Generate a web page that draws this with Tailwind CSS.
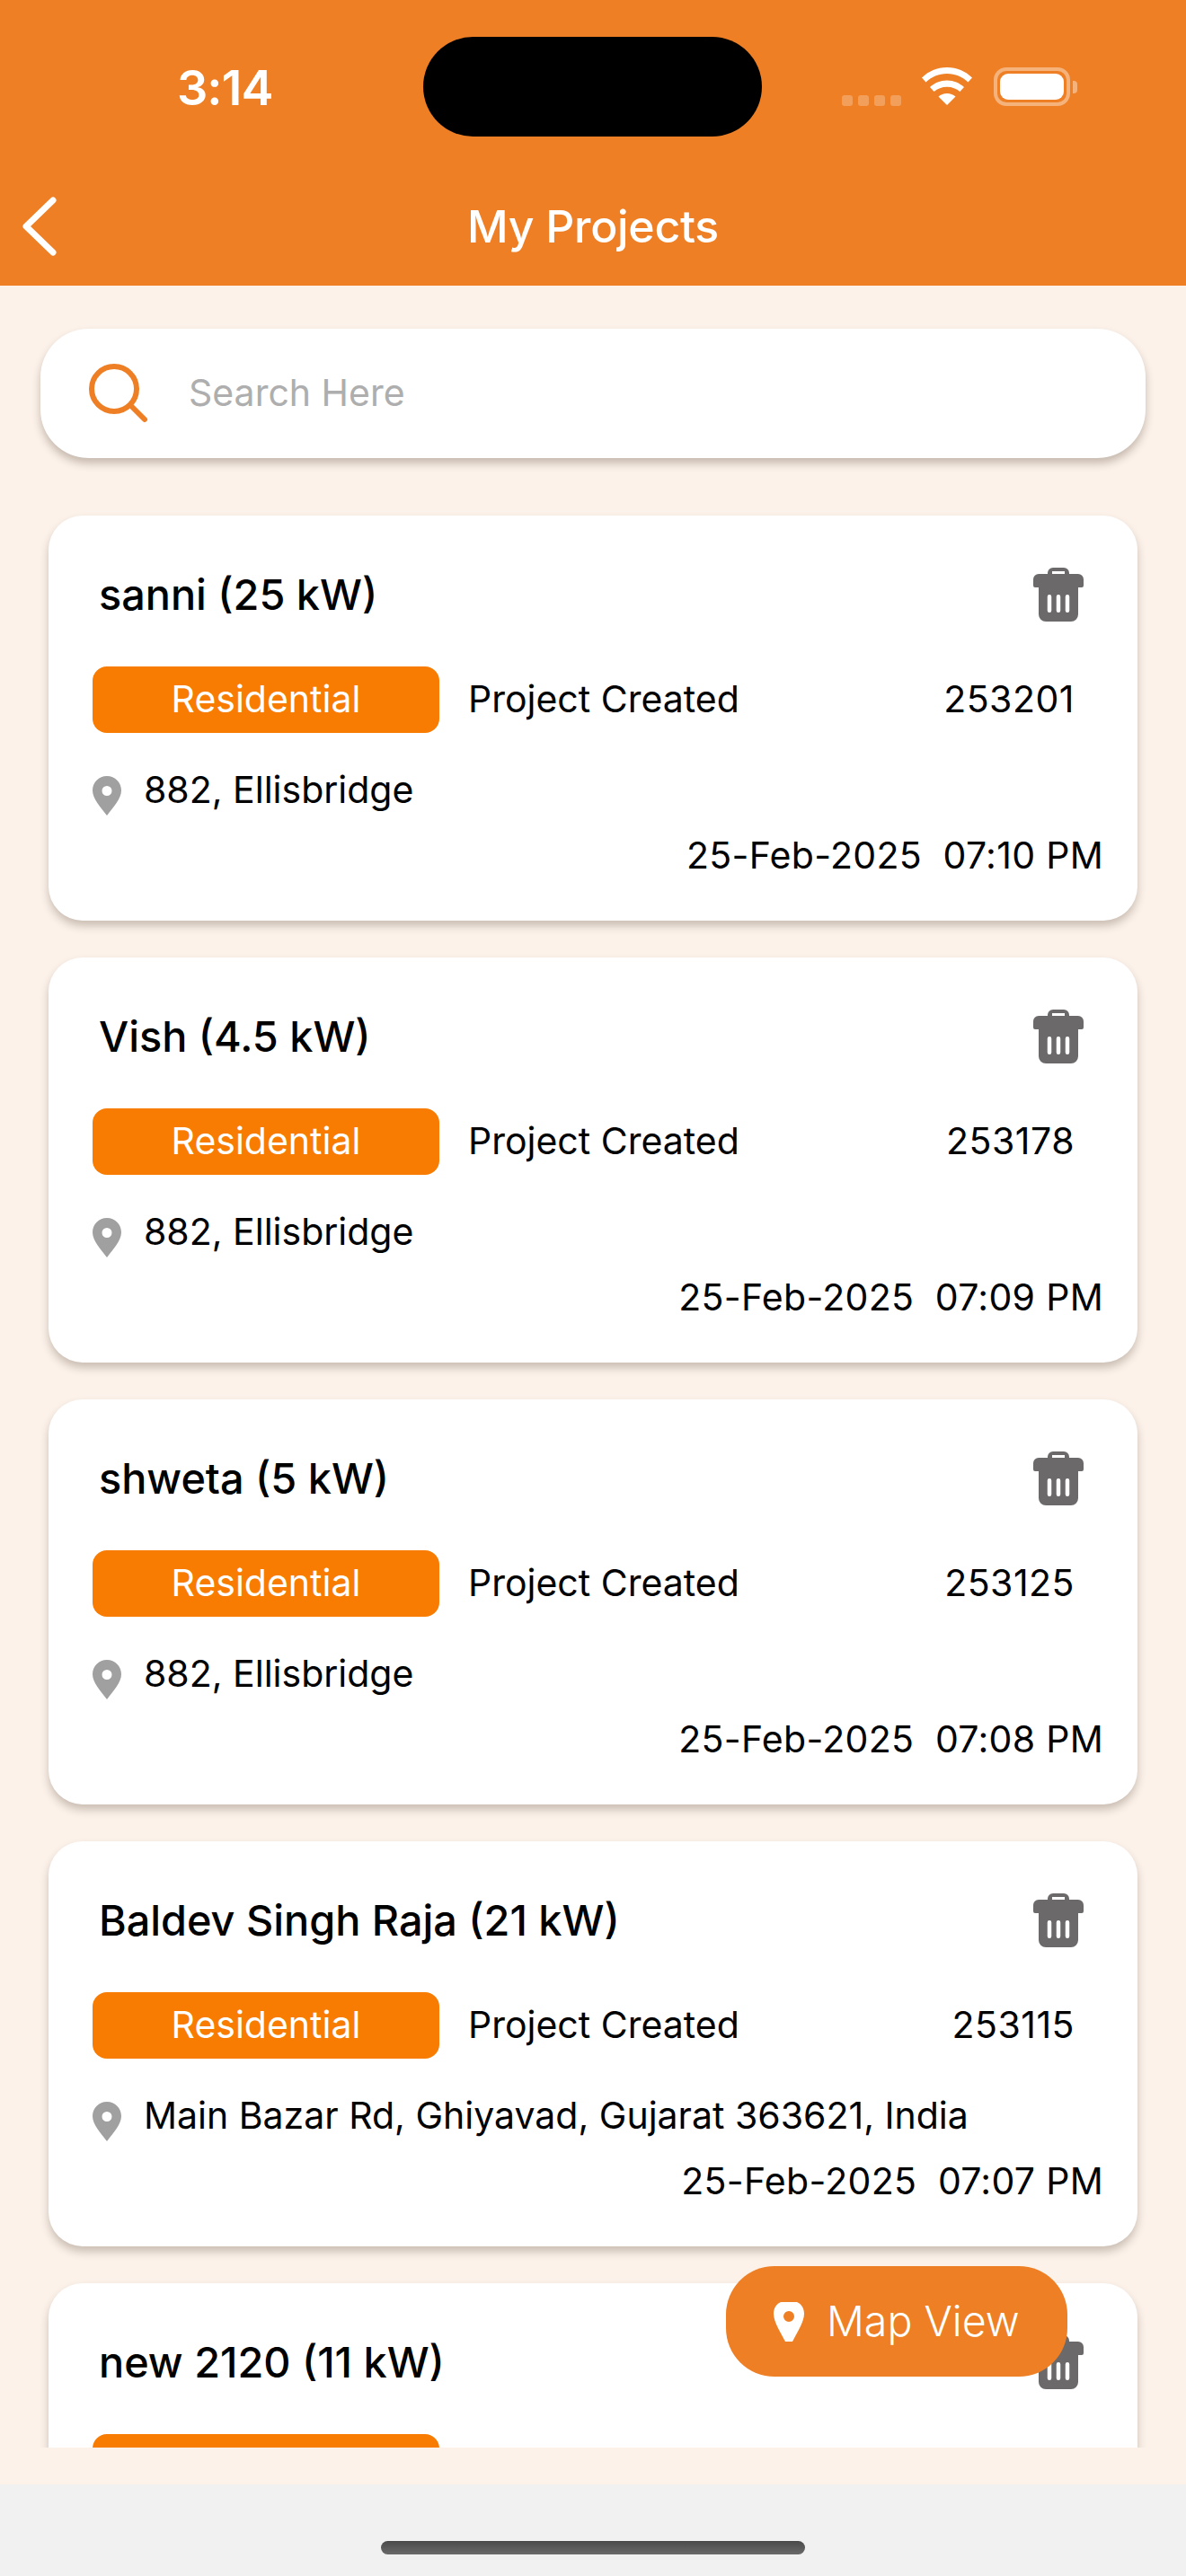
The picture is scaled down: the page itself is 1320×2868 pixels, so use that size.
<!DOCTYPE html>
<html><head><meta charset="utf-8">
<script src="https://cdn.jsdelivr.net/npm/@tailwindcss/browser@4"></script>
</head>
<body class="m-0 font-['Inter','Liberation_Sans',sans-serif]">
<div class="relative w-[1320px] h-[2868px] bg-[#f1f1f1] overflow-hidden flex flex-col">
  <header class="h-[318px] shrink-0 bg-[#ee7f24] text-white flex flex-col">
    <div class="h-[193px] shrink-0 relative flex">
      <div class="w-[471px] pl-[197px] pt-[68px] text-[54px] leading-[60px] font-semibold tracking-[-1px]">3:14</div>
      <div class="mt-[41px] w-[377px] h-[111px] rounded-[56px] bg-black"></div>
      <div class="ml-[89px] pt-[72px] flex items-start">
        <div class="mt-[34px] flex gap-[6px]">
          <span class="w-[12px] h-[12px] rounded-[3px] bg-white/25"></span><span class="w-[12px] h-[12px] rounded-[3px] bg-white/25"></span><span class="w-[12px] h-[12px] rounded-[3px] bg-white/25"></span><span class="w-[12px] h-[12px] rounded-[3px] bg-white/25"></span>
        </div>
        <svg class="ml-[22px] mt-[3px]" width="58" height="44" viewBox="0 0 58 44"><path fill="#fff" d="M29 0C18 0 8.500 4.200 1 11.500l4.500 5C11.500 10.600 19.800 7 29 7s17.500 3.600 23.500 9.500l4.500-5C49.500 4.200 40 0 29 0zM29 14.500c-7.500 0-13.800 2.900-19 7.500l4.600 5c3.900-3.300 8.700-5.300 14.400-5.300s10.500 2 14.400 5.300l4.600-5c-5.200-4.600-11.500-7.500-19-7.500zM29 29c-3.700 0-6.900 1.300-9.500 3.500L29 42l9.500-9.500C35.900 30.300 32.700 29 29 29z"/></svg>
        <div class="ml-[23px] mt-[3px] w-[85px] h-[43px] rounded-[14px] border-[4px] border-white/40 p-[3px] box-border"><div class="w-full h-full rounded-[9px] bg-white"></div></div>
        <div class="ml-[3px] mt-[18px] w-[5px] h-[14px] rounded-r-[4px] bg-white/40"></div>
      </div>
    </div>
    <div class="relative flex-1 flex items-start justify-center pt-[30px]">
      <svg class="absolute left-[23px] top-[26px]" width="40" height="66" viewBox="0 0 40 66" fill="none"><path d="M36 4 L6 33 L36 62" stroke="#fff" stroke-width="7" stroke-linecap="round" stroke-linejoin="round"/></svg>
      <h1 class="text-[50px] leading-[58px] font-medium tracking-[-0.3px]">My Projects</h1>
    </div>
  </header>
  <main class="relative h-[2448px] shrink-0 bg-[#fcf2ea]">
    <div class="h-[2407px] overflow-hidden px-[41px] pt-[48px]">
      <div class="ml-[4px] w-[1230px] h-[144px] rounded-[54px] bg-white shadow-[0_6px_10px_rgba(60,40,20,0.28)] flex items-center pl-[54px]">
        <svg width="66" height="66" viewBox="0 0 66 66" fill="none"><circle cx="28" cy="28" r="25" stroke="#ee7f24" stroke-width="6"/><path d="M46 46 L62 62" stroke="#ee7f24" stroke-width="6" stroke-linecap="round"/></svg>
        <span class="ml-[45px] text-[41px] text-[#aeaeae]">Search Here</span>
      </div>
      <div class="mt-[64px] mx-[13px] flex flex-col gap-[41px]">
        <article class="relative h-[451px] shrink-0 rounded-[38px] bg-white shadow-[0_6px_10px_rgba(60,40,20,0.25)] pl-[49px] pr-[38px]">
          <div class="h-[168px] pt-[60px] pl-[7px] text-[46.800px] leading-[56px] font-medium text-black">sanni (25 kW)</div>
          <svg class="absolute left-[1096px] top-[58px]" width="56" height="60" viewBox="0 0 56 60"><path fill="#6b6969" fill-rule="evenodd" d="M16 7V6a6 6 0 0 1 6-6h12a6 6 0 0 1 6 6v1h10a6 6 0 0 1 6 6v7a2 2 0 0 1-2 2h-4v30a8 8 0 0 1-8 8H14a8 8 0 0 1-8-8V22H2a2 2 0 0 1-2-2v-7a6 6 0 0 1 6-6zM21 4v3h14V4zM18 30a2.250 2.250 0 0 0-2.250 2.250v15.500a2.250 2.250 0 0 0 4.500 0v-15.500A2.250 2.250 0 0 0 18 30zM28 30a2.250 2.250 0 0 0-2.250 2.250v15.500a2.250 2.250 0 0 0 4.500 0v-15.500A2.250 2.250 0 0 0 28 30zM38 30a2.250 2.250 0 0 0-2.250 2.250v15.500a2.250 2.250 0 0 0 4.500 0v-15.500A2.250 2.250 0 0 0 38 30z"/></svg>
          <div class="flex items-center h-[74px] text-[41px] text-black">
            <span class="w-[386px] h-[74px] pb-[1px] rounded-[16px] bg-[#f87c02] text-white flex items-center justify-center">Residential</span>
            <span class="ml-[32px]">Project Created</span>
            <span class="absolute right-[70px] tracking-[0.5px]">253201</span>
          </div>
          <div class="mt-[48px] flex items-center h-[44px] text-[41px] text-black">
            <svg width="32" height="44" viewBox="0 0 32 44"><path fill="#a0a0a0" fill-rule="evenodd" d="M16 0C7 0 0 7 0 16c0 9 9 19 16 28 7-9 16-19 16-28C32 7 25 0 16 0zm0 11a5.500 5.500 0 1 1 0 11 5.500 5.500 0 0 1 0-11z"/></svg>
            <span class="ml-[25px] mb-[12px]">882, Ellisbridge</span>
          </div>
          <div class="mt-[22px] flex justify-end text-[41px] leading-[44px] text-black whitespace-pre tracking-[0.3px]">25-Feb-2025  07:10 PM</div>
        </article>
        <article class="relative h-[451px] shrink-0 rounded-[38px] bg-white shadow-[0_6px_10px_rgba(60,40,20,0.25)] pl-[49px] pr-[38px]">
          <div class="h-[168px] pt-[60px] pl-[7px] text-[46.800px] leading-[56px] font-medium text-black">Vish (4.5 kW)</div>
          <svg class="absolute left-[1096px] top-[58px]" width="56" height="60" viewBox="0 0 56 60"><path fill="#6b6969" fill-rule="evenodd" d="M16 7V6a6 6 0 0 1 6-6h12a6 6 0 0 1 6 6v1h10a6 6 0 0 1 6 6v7a2 2 0 0 1-2 2h-4v30a8 8 0 0 1-8 8H14a8 8 0 0 1-8-8V22H2a2 2 0 0 1-2-2v-7a6 6 0 0 1 6-6zM21 4v3h14V4zM18 30a2.250 2.250 0 0 0-2.250 2.250v15.500a2.250 2.250 0 0 0 4.500 0v-15.500A2.250 2.250 0 0 0 18 30zM28 30a2.250 2.250 0 0 0-2.250 2.250v15.500a2.250 2.250 0 0 0 4.500 0v-15.500A2.250 2.250 0 0 0 28 30zM38 30a2.250 2.250 0 0 0-2.250 2.250v15.500a2.250 2.250 0 0 0 4.500 0v-15.500A2.250 2.250 0 0 0 38 30z"/></svg>
          <div class="flex items-center h-[74px] text-[41px] text-black">
            <span class="w-[386px] h-[74px] pb-[1px] rounded-[16px] bg-[#f87c02] text-white flex items-center justify-center">Residential</span>
            <span class="ml-[32px]">Project Created</span>
            <span class="absolute right-[70px] tracking-[0.5px]">253178</span>
          </div>
          <div class="mt-[48px] flex items-center h-[44px] text-[41px] text-black">
            <svg width="32" height="44" viewBox="0 0 32 44"><path fill="#a0a0a0" fill-rule="evenodd" d="M16 0C7 0 0 7 0 16c0 9 9 19 16 28 7-9 16-19 16-28C32 7 25 0 16 0zm0 11a5.500 5.500 0 1 1 0 11 5.500 5.500 0 0 1 0-11z"/></svg>
            <span class="ml-[25px] mb-[12px]">882, Ellisbridge</span>
          </div>
          <div class="mt-[22px] flex justify-end text-[41px] leading-[44px] text-black whitespace-pre tracking-[0.3px]">25-Feb-2025  07:09 PM</div>
        </article>
        <article class="relative h-[451px] shrink-0 rounded-[38px] bg-white shadow-[0_6px_10px_rgba(60,40,20,0.25)] pl-[49px] pr-[38px]">
          <div class="h-[168px] pt-[60px] pl-[7px] text-[46.800px] leading-[56px] font-medium text-black">shweta (5 kW)</div>
          <svg class="absolute left-[1096px] top-[58px]" width="56" height="60" viewBox="0 0 56 60"><path fill="#6b6969" fill-rule="evenodd" d="M16 7V6a6 6 0 0 1 6-6h12a6 6 0 0 1 6 6v1h10a6 6 0 0 1 6 6v7a2 2 0 0 1-2 2h-4v30a8 8 0 0 1-8 8H14a8 8 0 0 1-8-8V22H2a2 2 0 0 1-2-2v-7a6 6 0 0 1 6-6zM21 4v3h14V4zM18 30a2.250 2.250 0 0 0-2.250 2.250v15.500a2.250 2.250 0 0 0 4.500 0v-15.500A2.250 2.250 0 0 0 18 30zM28 30a2.250 2.250 0 0 0-2.250 2.250v15.500a2.250 2.250 0 0 0 4.500 0v-15.500A2.250 2.250 0 0 0 28 30zM38 30a2.250 2.250 0 0 0-2.250 2.250v15.500a2.250 2.250 0 0 0 4.500 0v-15.500A2.250 2.250 0 0 0 38 30z"/></svg>
          <div class="flex items-center h-[74px] text-[41px] text-black">
            <span class="w-[386px] h-[74px] pb-[1px] rounded-[16px] bg-[#f87c02] text-white flex items-center justify-center">Residential</span>
            <span class="ml-[32px]">Project Created</span>
            <span class="absolute right-[70px] tracking-[0.5px]">253125</span>
          </div>
          <div class="mt-[48px] flex items-center h-[44px] text-[41px] text-black">
            <svg width="32" height="44" viewBox="0 0 32 44"><path fill="#a0a0a0" fill-rule="evenodd" d="M16 0C7 0 0 7 0 16c0 9 9 19 16 28 7-9 16-19 16-28C32 7 25 0 16 0zm0 11a5.500 5.500 0 1 1 0 11 5.500 5.500 0 0 1 0-11z"/></svg>
            <span class="ml-[25px] mb-[12px]">882, Ellisbridge</span>
          </div>
          <div class="mt-[22px] flex justify-end text-[41px] leading-[44px] text-black whitespace-pre tracking-[0.3px]">25-Feb-2025  07:08 PM</div>
        </article>
        <article class="relative h-[451px] shrink-0 rounded-[38px] bg-white shadow-[0_6px_10px_rgba(60,40,20,0.25)] pl-[49px] pr-[38px]">
          <div class="h-[168px] pt-[60px] pl-[7px] text-[46.800px] leading-[56px] font-medium text-black">Baldev Singh Raja (21 kW)</div>
          <svg class="absolute left-[1096px] top-[58px]" width="56" height="60" viewBox="0 0 56 60"><path fill="#6b6969" fill-rule="evenodd" d="M16 7V6a6 6 0 0 1 6-6h12a6 6 0 0 1 6 6v1h10a6 6 0 0 1 6 6v7a2 2 0 0 1-2 2h-4v30a8 8 0 0 1-8 8H14a8 8 0 0 1-8-8V22H2a2 2 0 0 1-2-2v-7a6 6 0 0 1 6-6zM21 4v3h14V4zM18 30a2.250 2.250 0 0 0-2.250 2.250v15.500a2.250 2.250 0 0 0 4.500 0v-15.500A2.250 2.250 0 0 0 18 30zM28 30a2.250 2.250 0 0 0-2.250 2.250v15.500a2.250 2.250 0 0 0 4.500 0v-15.500A2.250 2.250 0 0 0 28 30zM38 30a2.250 2.250 0 0 0-2.250 2.250v15.500a2.250 2.250 0 0 0 4.500 0v-15.500A2.250 2.250 0 0 0 38 30z"/></svg>
          <div class="flex items-center h-[74px] text-[41px] text-black">
            <span class="w-[386px] h-[74px] pb-[1px] rounded-[16px] bg-[#f87c02] text-white flex items-center justify-center">Residential</span>
            <span class="ml-[32px]">Project Created</span>
            <span class="absolute right-[70px] tracking-[0.5px]">253115</span>
          </div>
          <div class="mt-[48px] flex items-center h-[44px] text-[41px] text-black">
            <svg width="32" height="44" viewBox="0 0 32 44"><path fill="#a0a0a0" fill-rule="evenodd" d="M16 0C7 0 0 7 0 16c0 9 9 19 16 28 7-9 16-19 16-28C32 7 25 0 16 0zm0 11a5.500 5.500 0 1 1 0 11 5.500 5.500 0 0 1 0-11z"/></svg>
            <span class="ml-[25px] mb-[12px]">Main Bazar Rd, Ghiyavad, Gujarat 363621, India</span>
          </div>
          <div class="mt-[22px] flex justify-end text-[41px] leading-[44px] text-black whitespace-pre tracking-[0.3px]">25-Feb-2025  07:07 PM</div>
        </article>
        <article class="relative h-[451px] shrink-0 rounded-[38px] bg-white shadow-[0_6px_10px_rgba(60,40,20,0.25)] pl-[49px] pr-[38px]">
          <div class="h-[168px] pt-[60px] pl-[7px] text-[46.800px] leading-[56px] font-medium text-black">new 2120 (11 kW)</div>
          <svg class="absolute left-[1096px] top-[58px]" width="56" height="60" viewBox="0 0 56 60"><path fill="#6b6969" fill-rule="evenodd" d="M16 7V6a6 6 0 0 1 6-6h12a6 6 0 0 1 6 6v1h10a6 6 0 0 1 6 6v7a2 2 0 0 1-2 2h-4v30a8 8 0 0 1-8 8H14a8 8 0 0 1-8-8V22H2a2 2 0 0 1-2-2v-7a6 6 0 0 1 6-6zM21 4v3h14V4zM18 30a2.250 2.250 0 0 0-2.250 2.250v15.500a2.250 2.250 0 0 0 4.500 0v-15.500A2.250 2.250 0 0 0 18 30zM28 30a2.250 2.250 0 0 0-2.250 2.250v15.500a2.250 2.250 0 0 0 4.500 0v-15.500A2.250 2.250 0 0 0 28 30zM38 30a2.250 2.250 0 0 0-2.250 2.250v15.500a2.250 2.250 0 0 0 4.500 0v-15.500A2.250 2.250 0 0 0 38 30z"/></svg>
          <div class="flex items-center h-[74px]"><span class="w-[386px] h-[74px] rounded-[16px] bg-[#f87c02]"></span></div>
        </article>
      </div>
    </div>
    <button class="absolute left-[808px] top-[2205px] w-[380px] h-[123px] rounded-[54px] bg-[#ee7f24] text-white flex items-center pl-[53px] text-[46.500px] font-light">
      <svg width="34" height="44" viewBox="0 0 34 44"><path fill="#fff" fill-rule="evenodd" d="M8 0h18c5 2 8 7 8 13 0 9-8 21-13 31h-8C8 34 0 22 0 13 0 7 3 2 8 0zm9 10a6 6 0 1 0 0 12 6 6 0 0 0 0-12z"/></svg>
      <span class="ml-[25px]">Map View</span>
    </button>
  </main>
  <div class="flex-1 flex justify-center pt-[63px]"><div class="w-[472px] h-[15px] rounded-full bg-gradient-to-b from-[#4a4a4a] to-[#6a6a6a]"></div></div>
</div>
</body></html>
